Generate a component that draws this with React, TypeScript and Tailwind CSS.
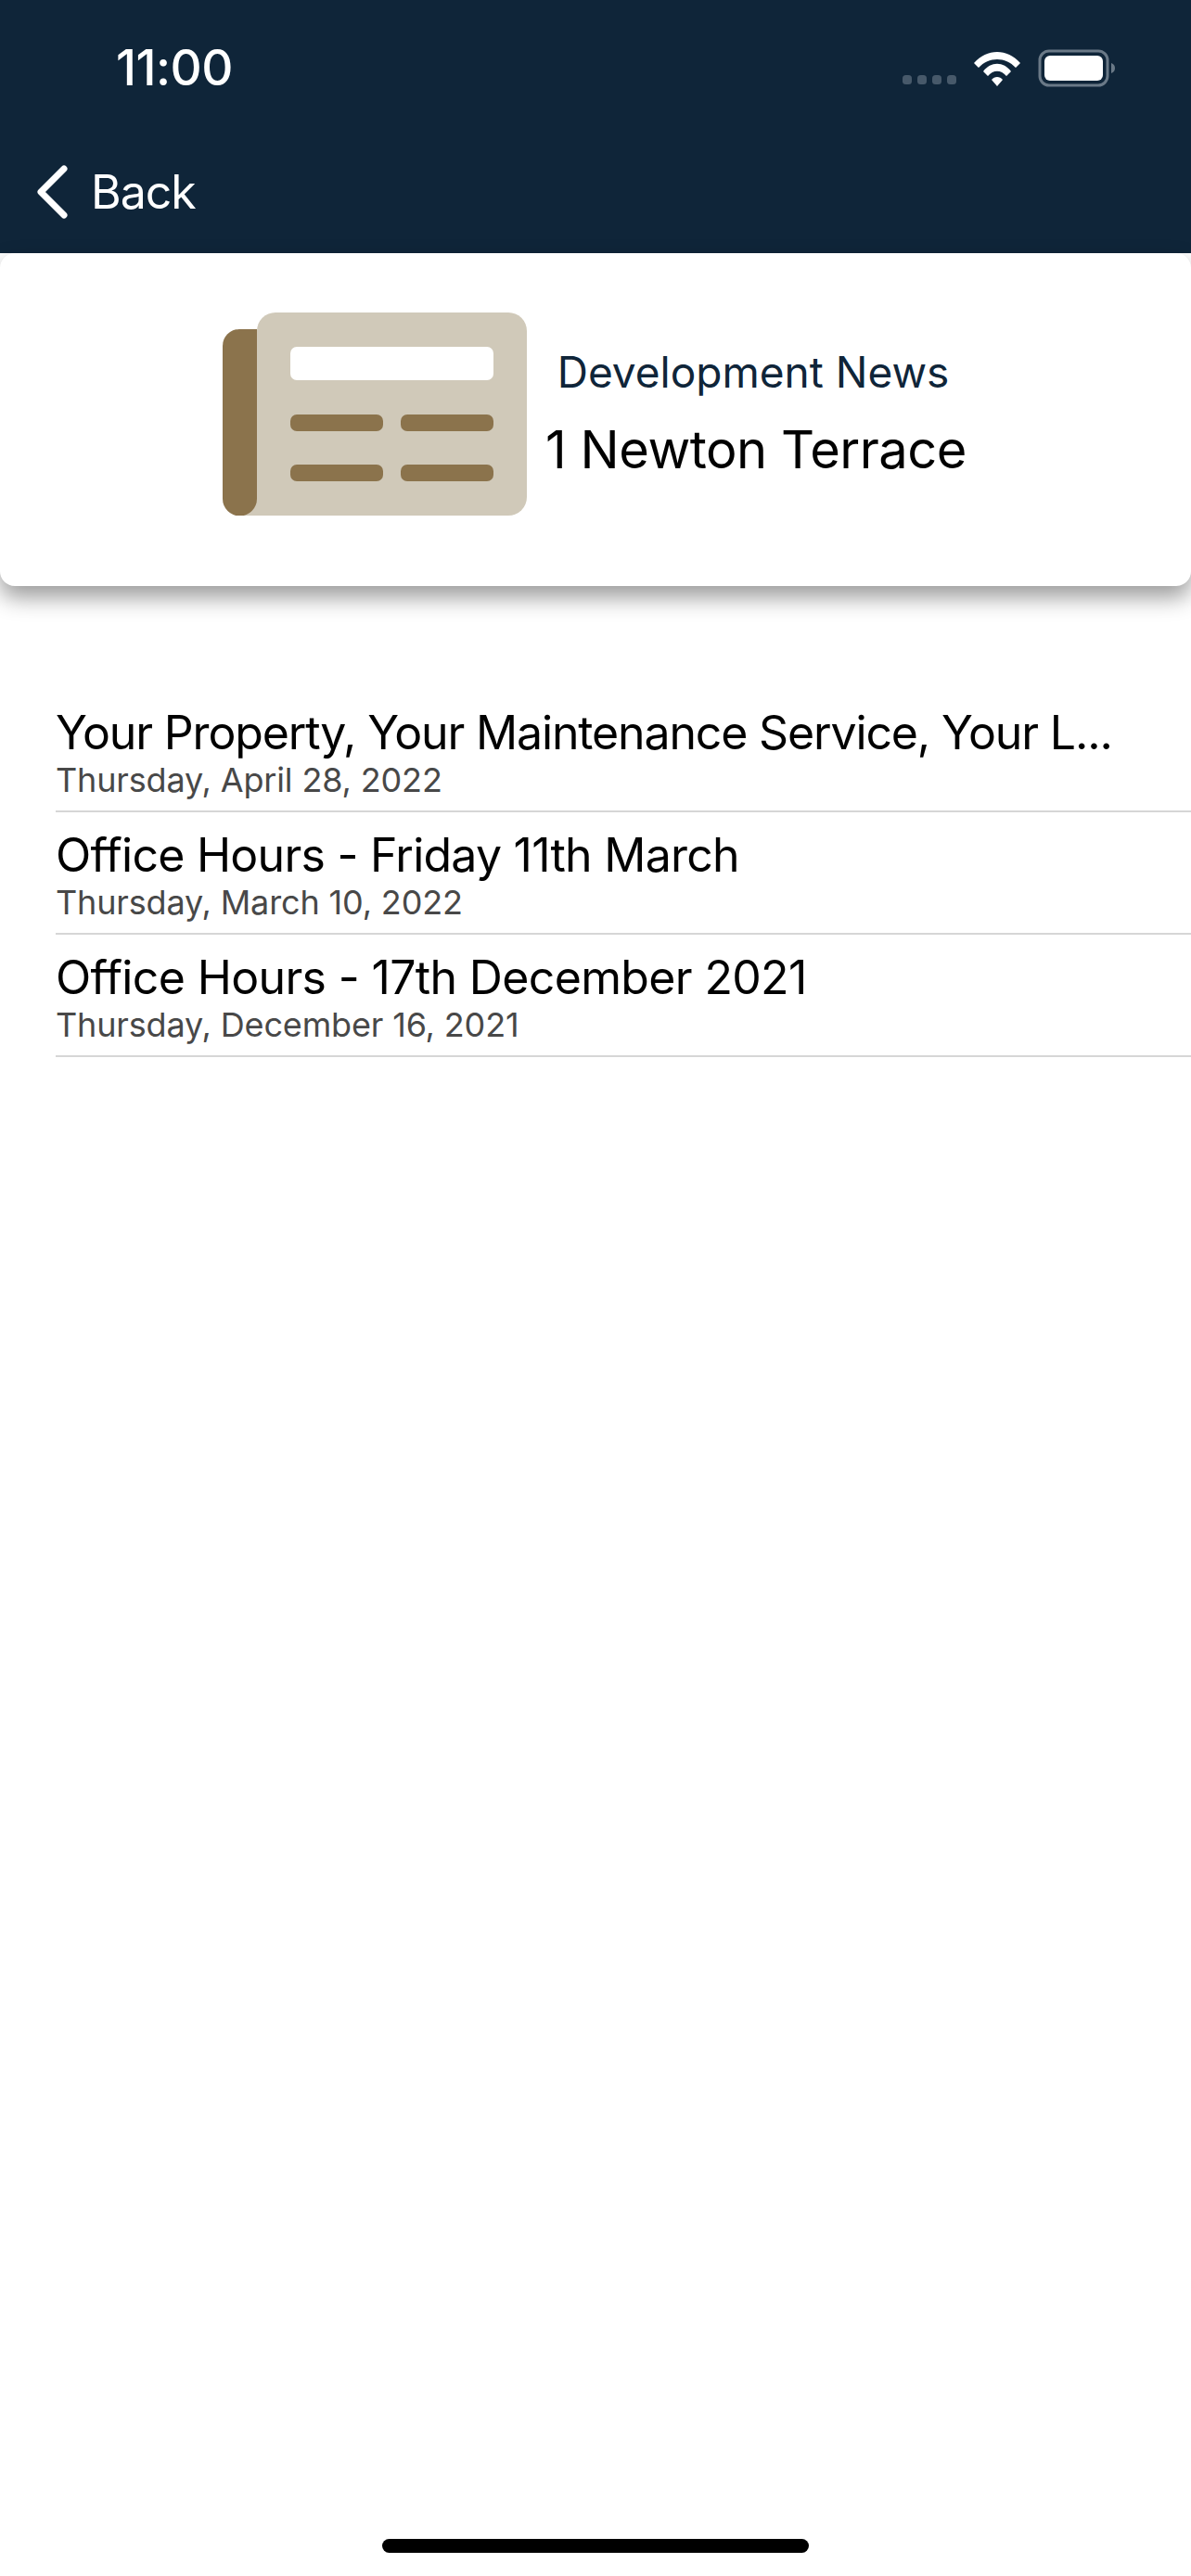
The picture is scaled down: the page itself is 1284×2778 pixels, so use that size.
import React from 'react';

const NEWS = [
  { title: 'Your Property, Your Maintenance Service, Your L...', date: 'Thursday, April 28, 2022', tracking: 'tracking-[-1.15px]' },
  { title: 'Office Hours - Friday 11th March', date: 'Thursday, March 10, 2022', tracking: 'tracking-[-0.75px]' },
  { title: 'Office Hours - 17th December 2021', date: 'Thursday, December 16, 2021', tracking: 'tracking-[-0.65px]' },
];

function StatusIcons() {
  return (
    <svg width="232" height="42" viewBox="0 0 232 42" fill="none">
      {/* signal dots */}
      <rect x="3" y="28" width="10" height="10" rx="3.5" fill="#47596a" />
      <rect x="19" y="28" width="10" height="10" rx="3.5" fill="#47596a" />
      <rect x="35" y="28" width="10" height="10" rx="3.5" fill="#47596a" />
      <rect x="51" y="28" width="10" height="10" rx="3.5" fill="#47596a" />
      {/* wifi */}
      <path d="M80 15 C94 -1 116 -1 130 15 L125 20 C114 8 96 8 85 20 Z" fill="#fff" />
      <path d="M90 24 C98 13 112 13 120 24 L115 29 C109 22 101 22 95 29 Z" fill="#fff" />
      <path d="M99 33 C102 29 108 29 111 33 L105 40 Z" fill="#fff" />
      {/* battery */}
      <rect x="151" y="2" width="73" height="37" rx="10" stroke="#6a7987" strokeWidth="3" />
      <rect x="156" y="7" width="63" height="27" rx="6" fill="#fff" />
      <path d="M228 15 C231 16 232 18 232 20.5 C232 23 231 25 228 26 Z" fill="#6a7987" />
    </svg>
  );
}

function NewsIcon() {
  return (
    <svg width="328" height="219" viewBox="0 0 328 219" className="shrink-0">
      <rect x="37" y="0" width="291" height="219" rx="20" fill="#d0c9b9" />
      <rect x="18" y="190" width="40" height="29" fill="#d0c9b9" />
      <path d="M37 18 H18 A18 18 0 0 0 0 36 V201 A18 18 0 0 0 37 201 Z" fill="#8b734c" />
      <rect x="73" y="37" width="219" height="36" rx="7" fill="#fff" />
      <rect x="73" y="110" width="100" height="18" rx="7" fill="#8b734c" />
      <rect x="192" y="110" width="100" height="18" rx="7" fill="#8b734c" />
      <rect x="73" y="164" width="100" height="18" rx="7" fill="#8b734c" />
      <rect x="192" y="164" width="100" height="18" rx="7" fill="#8b734c" />
    </svg>
  );
}

export default function App() {
  return (
    <div className="flex flex-col h-[2778px] w-[1284px] bg-white font-['Inter','Liberation_Sans',sans-serif] overflow-hidden">
      {/* Header */}
      <div className="h-[273px] shrink-0 bg-[#0f2539] text-white">
        <div className="flex items-center justify-between h-[147px] pl-[125px] pr-[82px]">
          <span className="text-[53px] leading-none font-medium tracking-[-0.5px]">11:00</span>
          <StatusIcons />
        </div>
        <div className="flex items-center gap-[24px] pl-[38px] h-[62px] mt-[29px]">
          <svg width="36" height="58" viewBox="0 0 36 58" fill="none">
            <path d="M31 4 L6 29 L31 54" stroke="#fff" strokeWidth="7" strokeLinecap="round" strokeLinejoin="round" />
          </svg>
          <span className="text-[50px] leading-none tracking-[-1px]">Back</span>
        </div>
      </div>

      {/* Card */}
      <div className="flex items-center h-[359px] shrink-0 bg-white rounded-[16px] shadow-[0_12px_24px_rgba(0,0,0,0.4)] pl-[240px] pb-[12px]">
        <div className="flex items-center gap-[19px]">
          <NewsIcon />
          <div className="flex flex-col items-center gap-[25px] w-[456px]">
            <span className="text-[46px] leading-[52px] text-[#0f2539] whitespace-nowrap -translate-x-[3px]">Development News</span>
            <span className="text-[56px] leading-[66px] text-black tracking-[-0.5px] whitespace-nowrap">1 Newton Terrace</span>
          </div>
        </div>
      </div>

      {/* List */}
      <div className="pt-[112px] pl-[60px]">
        {NEWS.map((n) => (
          <div key={n.date} className="h-[132px] border-b-2 border-[#d6d6d6] flex flex-col justify-end pb-[12px]">
            <p className={`text-[50px] leading-[58px] text-black whitespace-nowrap mb-[1px] ${n.tracking}`}>{n.title}</p>
            <p className="text-[36px] leading-[42px] text-[#484848] tracking-[-0.15px]">{n.date}</p>
          </div>
        ))}
      </div>

      {/* Home indicator */}
      <div className="mt-auto mb-[25px] mx-auto w-[460px] h-[15px] rounded-full bg-black" />
    </div>
  );
}
